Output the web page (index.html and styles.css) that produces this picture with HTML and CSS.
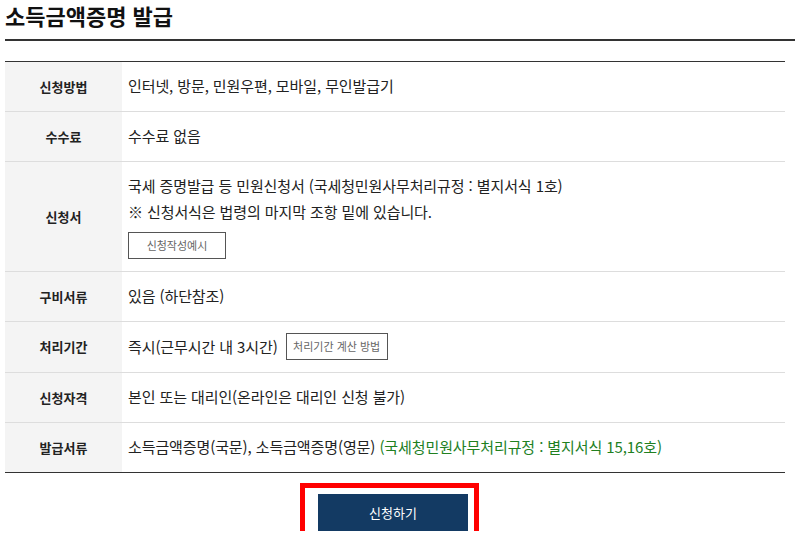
FILE: index.html
```html
<!DOCTYPE html>
<html lang="ko">
<head>
    <meta charset="UTF-8">
    <meta name="viewport" content="width=device-width, initial-scale=1.0">
    <title>소득금액증명 발급</title>
    <link rel="stylesheet" href="styles.css">
</head>
<body>
    <div class="container">
        <h2 class="page-title">소득금액증명 발급</h2>

        <table class="info-table">
            <tr>
                <th>신청방법</th>
                <td>인터넷, 방문, 민원우편, 모바일, 무인발급기</td>
            </tr>
            <tr>
                <th>수수료</th>
                <td>수수료 없음</td>
            </tr>
            <tr>
                <th>신청서</th>
                <td>
                    국세 증명발급 등 민원신청서 (국세청민원사무처리규정 : 별지서식 1호)<br>
                    ※ 신청서식은 법령의 마지막 조항 밑에 있습니다.
                    <div class="sub-row">
                        <button class="btn-line btn-sample">신청작성예시</button>
                    </div>
                </td>
            </tr>
            <tr>
                <th>구비서류</th>
                <td>있음 (하단참조)</td>
            </tr>
            <tr>
                <th>처리기간</th>
                <td>
                    <div class="inline-row">
                        <span>즉시(근무시간 내 3시간)</span>
                        <button class="btn-line btn-calc">처리기간 계산 방법</button>
                    </div>
                </td>
            </tr>
            <tr>
                <th>신청자격</th>
                <td>본인 또는 대리인(온라인은 대리인 신청 불가)</td>
            </tr>
            <tr>
                <th>발급서류</th>
                <td>소득금액증명(국문), 소득금액증명(영문) <span class="green">(국세청민원사무처리규정 : 별지서식 15,16호)</span></td>
            </tr>
        </table>

        <div class="actions">
            <span class="apply-wrap">
                <button class="btn-apply">신청하기</button>
                <span class="highlight"></span>
            </span>
        </div>
    </div>
</body>
</html>
```

FILE: styles.css
```css
* {
    margin: 0;
    padding: 0;
    box-sizing: border-box;
}

body {
    font-family: "Noto Sans CJK KR", "Noto Sans", sans-serif;
    background-color: #fff;
    color: #222;
}

.container {
    padding-left: 5px;
}

.page-title {
    font-size: 22px;
    font-weight: bold;
    line-height: 30px;
    color: #111;
    padding-bottom: 9px;
    border-bottom: 2px solid #333;
}

.info-table {
    width: 780px;
    margin-top: 20px;
    border-collapse: collapse;
    border-top: 1px solid #333;
    border-bottom: 1px solid #333;
}

.info-table tr {
    border-bottom: 1px solid #ddd;
}

.info-table tr:last-child {
    border-bottom: none;
}

.info-table th {
    width: 117px;
    background-color: #f4f4f4;
    font-size: 13px;
    font-weight: bold;
    line-height: 18px;
    color: #222;
    text-align: center;
}

.info-table td {
    padding: 11px 6px 12px;
    font-size: 15px;
    line-height: 26px;
    letter-spacing: -0.1px;
    color: #222;
}

.green {
    color: #21801f;
}

.sub-row {
    padding-top: 6px;
}

.inline-row {
    display: flex;
    align-items: center;
    gap: 8px;
}

.btn-line {
    height: 27px;
    background: #fff;
    border: 1px solid #555;
    color: #666;
    font-family: inherit;
    font-size: 11px;
    line-height: 25px;
    letter-spacing: 0;
}

.btn-sample {
    width: 98px;
}

.btn-calc {
    width: 102px;
}

.actions {
    width: 780px;
    margin-top: 21px;
    text-align: center;
}

.apply-wrap {
    position: relative;
    display: inline-block;
    margin-right: 4px;
}

.btn-apply {
    display: block;
    width: 150px;
    height: 37px;
    background-color: #133a63;
    color: #fff;
    border: none;
    font-family: inherit;
    font-size: 13px;
}

.highlight {
    position: absolute;
    left: -18px;
    top: -11px;
    width: 179px;
    height: 54px;
    border: 5px solid #f00;
}
```
